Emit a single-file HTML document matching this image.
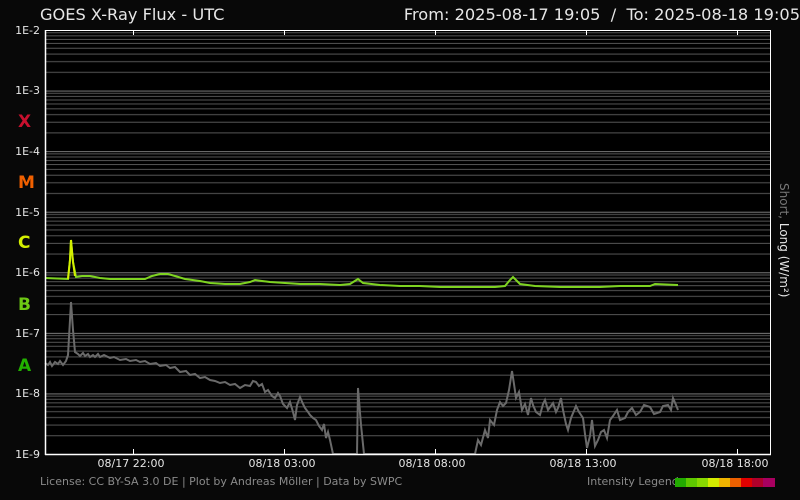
<!DOCTYPE html>
<html><head><meta charset="utf-8"><style>
html,body{margin:0;padding:0;background:#080808;}
svg{display:block;font-family:"DejaVu Sans","Liberation Sans",sans-serif;}
</style></head><body>
<svg width="800" height="500" viewBox="0 0 800 500" xmlns="http://www.w3.org/2000/svg">
<defs>
<pattern id="g" x="0" y="30" width="800" height="60.571" patternUnits="userSpaceOnUse">
<line x1="0" x2="800" y1="0.5" y2="0.5" stroke="#7a7a7a" stroke-width="1"/>
<line x1="0" x2="800" y1="2.77" y2="2.77" stroke="#555" stroke-width="1"/>
<line x1="0" x2="800" y1="5.87" y2="5.87" stroke="#555" stroke-width="1"/>
<line x1="0" x2="800" y1="9.38" y2="9.38" stroke="#555" stroke-width="1"/>
<line x1="0" x2="800" y1="13.44" y2="13.44" stroke="#555" stroke-width="1"/>
<line x1="0" x2="800" y1="18.24" y2="18.24" stroke="#555" stroke-width="1"/>
<line x1="0" x2="800" y1="24.1" y2="24.1" stroke="#555" stroke-width="1"/>
<line x1="0" x2="800" y1="31.67" y2="31.67" stroke="#555" stroke-width="1"/>
<line x1="0" x2="800" y1="42.34" y2="42.34" stroke="#555" stroke-width="1"/>
</pattern>
</defs>
<rect x="45" y="30" width="726" height="424" fill="#000"/>
<rect x="46" y="31" width="724" height="423" fill="url(#g)"/>
<polyline fill="none" stroke="#6a6a6a" stroke-width="2" points="45,363 48,365 50,362 52,366 55,362 58,364 60,361 63,365 66,361 68,355 70,320 71,302 73,330 75,352 78,354 80,356 83,353 85,356 88,354 90,357 93,355 95,357 98,354 100,357 104,355 110,358 114,357 120,360 126,359 130,361 136,360 140,362 145,361 150,364 156,363 160,366 166,365 170,368 175,367 180,372 186,371 190,375 195,374 200,378 205,377 210,380 215,381 220,383 225,382 230,385 235,384 240,388 245,385 250,386 253,381 256,382 259,386 262,384 265,392 268,390 272,396 275,398 278,393 280,396 283,404 287,408 290,402 293,412 295,420 297,405 300,397 303,404 305,408 308,412 310,415 313,418 316,420 319,426 322,430 324,424 326,438 328,432 330,440 333,454 357,454 358,388 361,425 364,454 475,454 478,440 481,445 485,430 488,438 490,420 494,425 497,410 500,402 503,406 506,403 509,390 512,371 514,384 516,398 519,392 522,410 525,404 528,415 531,398 533,405 536,412 540,415 543,404 545,400 548,410 553,403 556,412 558,408 561,398 563,410 566,424 568,430 571,418 576,406 579,412 583,418 585,434 587,448 590,436 592,420 595,446 598,440 601,432 604,430 607,438 610,420 613,416 617,410 620,420 625,418 628,412 632,408 636,415 640,412 644,405 650,407 654,414 660,412 663,406 668,405 671,410 673,398 676,405 678,410"/>
<polyline fill="none" stroke="#7ed321" stroke-width="2" points="45,278 68,279 70,260 71,240 73,262 76,277 82,276 90,276 100,278 110,279 145,279 152,276 160,274 168,274 175,276 185,279 200,281 210,283 225,284 240,284 250,282 255,280 262,281 270,282 285,283 300,284 320,284 340,285 350,284 358,279 363,283 380,285 400,286 420,286 440,287 460,287 480,287 495,287 505,286 510,280 513,277 517,281 520,284 535,286 560,287 580,287 600,287 620,286 650,286 655,284 678,285"/>
<polyline fill="none" stroke="#d4f000" stroke-width="2" points="68,279 70,260 71,240 73,262 75,276"/>
<line x1="45.5" y1="30" x2="45.5" y2="455" stroke="#fff" stroke-width="1.5"/>
<line x1="45" y1="454.5" x2="771" y2="454.5" stroke="#fff" stroke-width="1.5"/>
<line x1="45" y1="30.5" x2="771" y2="30.5" stroke="#fff" stroke-width="1"/>
<line x1="770.5" y1="30" x2="770.5" y2="455" stroke="#fff" stroke-width="1"/>
<g stroke="#fff" stroke-width="1">
<line x1="133.5" y1="30" x2="133.5" y2="35"/><line x1="284.5" y1="30" x2="284.5" y2="35"/><line x1="435.5" y1="30" x2="435.5" y2="35"/><line x1="586.5" y1="30" x2="586.5" y2="35"/><line x1="737.5" y1="30" x2="737.5" y2="35"/>
<line x1="133.5" y1="449" x2="133.5" y2="454"/><line x1="284.5" y1="449" x2="284.5" y2="454"/><line x1="435.5" y1="449" x2="435.5" y2="454"/><line x1="586.5" y1="449" x2="586.5" y2="454"/><line x1="737.5" y1="449" x2="737.5" y2="454"/>
</g>
<text x="40" y="20" fill="#e6e6e6" font-size="16.2">GOES X-Ray Flux - UTC</text>
<text x="800" y="20" fill="#e6e6e6" font-size="16.2" text-anchor="end">From: 2025-08-17 19:05&#160;&#160;/&#160;&#160;To: 2025-08-18 19:05</text>
<g fill="#e6e6e6" font-size="11" text-anchor="end">
<text x="40" y="34">1E-2</text><text x="40" y="94">1E-3</text><text x="40" y="155">1E-4</text><text x="40" y="216">1E-5</text><text x="40" y="276">1E-6</text><text x="40" y="337">1E-7</text><text x="40" y="397">1E-8</text><text x="40" y="458">1E-9</text>
</g>
<g font-size="17" font-weight="bold">
<text x="18" y="127" fill="#c8102e">X</text>
<text x="18" y="188" fill="#f06000">M</text>
<text x="18" y="248" fill="#d4f000">C</text>
<text x="18" y="310" fill="#6ec814">B</text>
<text x="18" y="371" fill="#22b000">A</text>
</g>
<g fill="#e6e6e6" font-size="11" text-anchor="middle">
<text x="131" y="467">08/17 22:00</text><text x="282" y="467">08/18 03:00</text><text x="432" y="467">08/18 08:00</text><text x="583" y="467">08/18 13:00</text><text x="735" y="467">08/18 18:00</text>
</g>
<text x="40" y="485" fill="#8a8a8a" font-size="11">License: CC BY-SA 3.0 DE | Plot by Andreas Möller | Data by SWPC</text>
<text x="587" y="485" fill="#8a8a8a" font-size="11">Intensity Legend</text>
<g>
<rect x="675" y="478" width="11" height="9" fill="#22aa00"/>
<rect x="686" y="478" width="11" height="9" fill="#5ec800"/>
<rect x="697" y="478" width="11" height="9" fill="#88d800"/>
<rect x="708" y="478" width="11" height="9" fill="#d4ec00"/>
<rect x="719" y="478" width="11" height="9" fill="#f0b400"/>
<rect x="730" y="478" width="11" height="9" fill="#ec6000"/>
<rect x="741" y="478" width="11" height="9" fill="#e00000"/>
<rect x="752" y="478" width="11" height="9" fill="#b0002a"/>
<rect x="763" y="478" width="12" height="9" fill="#a80060"/>
</g>
<text transform="translate(780,183) rotate(90)" font-size="12"><tspan fill="#777">Short, </tspan><tspan fill="#e6e6e6">Long (W/m²)</tspan></text>
</svg>
</body></html>
